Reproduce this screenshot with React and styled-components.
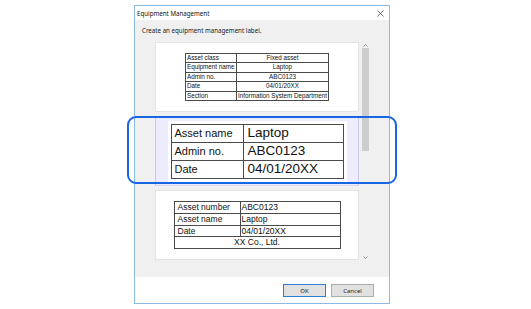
import React from "react";
import styled, { createGlobalStyle } from "styled-components";

const GlobalStyle = createGlobalStyle`
    html, body {
        margin: 0;
        padding: 0;
        background: #ffffff;
    }
`;

const Page = styled.div`
    position: relative;
    width: 531px;
    height: 309px;
    box-sizing: border-box;
    padding: 5px 0 0 134px;
    background: #ffffff;
    font-family: "Noto Sans", "Liberation Sans", sans-serif;
`;

const Dialog = styled.div`
    width: 256px;
    height: 299px;
    box-sizing: border-box;
    border: 1px solid #8bbbe8;
    display: flex;
    flex-direction: column;
    background: #ffffff;
`;

const TitleBar = styled.div`
    height: 14px;
    display: flex;
    align-items: center;
    justify-content: space-between;
    padding: 0 5px 0 2px;
    font-size: 6.2px;
    color: #111111;
`;

const Body = styled.div`
    flex: 1;
    background: #f0f0f0;
    display: flex;
    flex-direction: column;
    padding-bottom: 14px;
`;

const Description = styled.div`
    height: 20px;
    box-sizing: border-box;
    padding: 7px 0 0 7px;
    font-size: 6.2px;
    line-height: 8px;
    color: #222222;
`;

const ListRow = styled.div`
    display: flex;
    margin-left: 18px;
    height: 222px;
`;

const CardColumn = styled.div`
    width: 208px;
    box-sizing: border-box;
    padding: 2px;
    display: flex;
    flex-direction: column;
    gap: 4px;
    overflow: hidden;
`;

const Card = styled.div`
    height: 70px;
    flex-shrink: 0;
    box-sizing: border-box;
    display: flex;
    align-items: center;
    justify-content: center;
    background: ${p => (p.$selected ? "#ececfc" : "#ffffff")};
    border: 1px solid ${p => (p.$selected ? "#d9d9f4" : "#e4e4e4")};
    border-left-color: ${p => (p.$selected ? "#c9c9ee" : "#e4e4e4")};
    border-right-color: ${p => (p.$selected ? "#c9c9ee" : "#e4e4e4")};
`;

const Label = styled.div`
    background: #ffffff;
    padding: 3px;
`;

const Table = styled.table`
    border-collapse: collapse;
    width: ${p => p.$width}px;
    border: 1px solid #3a3a3a;
    font-family: "Liberation Sans", Arial, sans-serif;
    color: #111111;
    table-layout: fixed;

    td {
        border: 1px solid #4a4a4a;
        height: ${p => p.$row}px;
        padding: 0;
        vertical-align: middle;
        white-space: nowrap;
        overflow: hidden;
        line-height: 1;
    }
`;

const KeyCell = styled.td`
    width: ${p => p.$width}px;
    font-size: ${p => p.$size}px;
    padding-left: ${p => p.$pad}px !important;
    text-align: left;
`;

const ValueCell = styled.td`
    font-size: ${p => p.$size}px;
    padding-left: ${p => p.$pad || 0}px !important;
    text-align: ${p => p.$align || "left"};
`;

const Scrollbar = styled.div`
    width: 9px;
    margin: 2px 0 2px 0;
    background: #f0f0f0;
    display: flex;
    flex-direction: column;
    align-items: center;
`;

const Arrow = styled.div`
    height: 6px;
    display: flex;
    align-items: center;
    justify-content: center;
`;

const Thumb = styled.div`
    width: 7px;
    height: 103px;
    background: #cdcdcd;
`;

const Spacer = styled.div`
    flex: 1;
`;

const Footer = styled.div`
    height: 26px;
    box-sizing: border-box;
    background: #ffffff;
    display: flex;
    justify-content: flex-end;
    align-items: flex-start;
    gap: 5px;
    padding: 7px 15px 0 0;
`;

const Button = styled.button`
    width: 43px;
    height: 13px;
    box-sizing: border-box;
    padding: 0;
    margin: 0;
    font-family: "Noto Sans", "Liberation Sans", sans-serif;
    font-size: 6px;
    color: #222222;
    background: #e1e1e1;
    border: 1px solid ${p => (p.$primary ? "#2a7fd4" : "#adadad")};
`;

const Highlight = styled.div`
    position: absolute;
    left: 127px;
    top: 116px;
    width: 270px;
    height: 68px;
    box-sizing: border-box;
    border: 2px solid #1765e2;
    border-radius: 9px;
    pointer-events: none;
`;

const Close = () => (
    <svg width="7" height="7" viewBox="0 0 7 7">
        <path d="M0.5 0.5 L6.5 6.5 M6.5 0.5 L0.5 6.5" stroke="#444" strokeWidth="0.8" />
    </svg>
);

const Chevron = ({ up }) => (
    <svg width="5" height="3" viewBox="0 0 5 3">
        <path d={up ? "M0.5 2.5 L2.5 0.5 L4.5 2.5" : "M0.5 0.5 L2.5 2.5 L4.5 0.5"} stroke="#7a7a7a" strokeWidth="0.8" fill="none" />
    </svg>
);

const firstRows = [
    ["Asset class", "Fixed asset"],
    ["Equipment name", "Laptop"],
    ["Admin no.", "ABC0123"],
    ["Date", "04/01/20XX"],
    ["Section", "Information System Department"],
];

const secondRows = [
    ["Asset name", "Laptop"],
    ["Admin no.", "ABC0123"],
    ["Date", "04/01/20XX"],
];

const thirdRows = [
    ["Asset number", "ABC0123"],
    ["Asset name", "Laptop"],
    ["Date", "04/01/20XX"],
];

const App = () => {
    return (
        <>
            <GlobalStyle />
            <Page>
                <Dialog>
                    <TitleBar>
                        <span>Equipment Management</span>
                        <Close />
                    </TitleBar>
                    <Body>
                        <Description>Create an equipment management label.</Description>
                        <ListRow>
                            <CardColumn>
                                <Card>
                                    <Label>
                                        <Table $width={144} $row={8.6}>
                                            <tbody>
                                                {firstRows.map(([k, v]) => (
                                                    <tr key={k}>
                                                        <KeyCell $width={49} $size={6.3} $pad={1}>{k}</KeyCell>
                                                        <ValueCell $size={6.3} $align="center">{v}</ValueCell>
                                                    </tr>
                                                ))}
                                            </tbody>
                                        </Table>
                                    </Label>
                                </Card>
                                <Card $selected>
                                    <Label>
                                        <Table $width={173} $row={17}>
                                            <tbody>
                                                {secondRows.map(([k, v]) => (
                                                    <tr key={k}>
                                                        <KeyCell $width={68} $size={11} $pad={3}>{k}</KeyCell>
                                                        <ValueCell $size={13.5} $pad={4}>{v}</ValueCell>
                                                    </tr>
                                                ))}
                                            </tbody>
                                        </Table>
                                    </Label>
                                </Card>
                                <Card>
                                    <Label>
                                        <Table $width={167} $row={10.75}>
                                            <tbody>
                                                {thirdRows.map(([k, v]) => (
                                                    <tr key={k}>
                                                        <KeyCell $width={62} $size={8.5} $pad={3}>{k}</KeyCell>
                                                        <ValueCell $size={8.5} $pad={1}>{v}</ValueCell>
                                                    </tr>
                                                ))}
                                                <tr>
                                                    <ValueCell colSpan={2} $size={8.5} $align="center">XX Co., Ltd.</ValueCell>
                                                </tr>
                                            </tbody>
                                        </Table>
                                    </Label>
                                </Card>
                            </CardColumn>
                            <Scrollbar>
                                <Arrow><Chevron up /></Arrow>
                                <Thumb />
                                <Spacer />
                                <Arrow><Chevron /></Arrow>
                            </Scrollbar>
                        </ListRow>
                    </Body>
                    <Footer>
                        <Button $primary>OK</Button>
                        <Button>Cancel</Button>
                    </Footer>
                </Dialog>
                <Highlight />
            </Page>
        </>
    );
};

export default App;
